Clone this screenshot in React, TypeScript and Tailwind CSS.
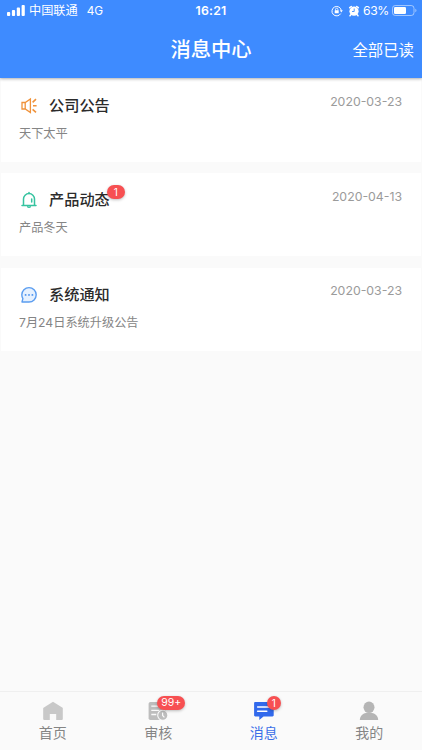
import type { ReactNode } from 'react';

interface Message {
  title: string;
  date: string;
  summary: string;
  icon: ReactNode;
  unread?: number;
}

function HornIcon() {
  return (
    <svg className="h-5 w-5" viewBox="0 0 20 20" fill="none" stroke="#f0923a" strokeWidth="1.3">
      <path d="M3 6.500h3.200L11.400 3v13.500L6.200 13H3z" />
      <path d="M6.200 6.500V13" />
      <path d="M13.600 6.300l3.400-3.100M14 9.800h3.600M13.600 13.300l3.400 3.100" strokeWidth="1.6" />
    </svg>
  );
}

function BellIcon() {
  return (
    <svg className="h-5 w-5" viewBox="0 0 20 20" fill="none" stroke="#36c3a0" strokeWidth="1.5" strokeLinecap="round">
      <path d="M4.500 15.200V9.100a5.500 5.500 0 0 1 11 0v6.100" />
      <path d="M3 15.400h14M10 2.400v1M12.700 9v2.900" />
      <path d="M8.700 16.800c.5.600 2.100.6 2.600 0" />
    </svg>
  );
}

function ChatIcon() {
  return (
    <svg className="h-5 w-5" viewBox="0 0 20 20">
      <path
        d="M2.800 9.800a7.200 7.200 0 1 1 7.200 7.200H3l.9-3.400A7.200 7.200 0 0 1 2.800 9.800z"
        fill="#e6f1ff"
        stroke="#5b9df0"
        strokeWidth="1.4"
        strokeLinejoin="round"
      />
      <circle cx="6.600" cy="9.900" r=".95" fill="#4a90ee" />
      <circle cx="10" cy="9.900" r=".95" fill="#4a90ee" />
      <circle cx="13.400" cy="9.900" r=".95" fill="#4a90ee" />
    </svg>
  );
}

const messages: Message[] = [
  { title: '公司公告', date: '2020-03-23', summary: '天下太平', icon: <HornIcon /> },
  { title: '产品动态', date: '2020-04-13', summary: '产品冬天', icon: <BellIcon />, unread: 1 },
  { title: '系统通知', date: '2020-03-23', summary: '7月24日系统升级公告', icon: <ChatIcon /> },
];

function StatusBar() {
  return (
    <div className="grid h-[22px] grid-cols-[1fr_auto_1fr] items-center pl-[7px] pr-[5px] text-[12px] leading-none">
      <div className="flex items-center">
        <svg className="h-[11px] w-[18px]" viewBox="0 0 18 11" fill="currentColor">
          <rect x="0" y="7" width="3.2" height="4" rx=".9" />
          <rect x="4.9" y="5" width="3.2" height="6" rx=".9" />
          <rect x="9.8" y="2.6" width="3.2" height="8.4" rx=".9" />
          <rect x="14.6" y="0" width="3.2" height="11" rx=".9" />
        </svg>
        <span className="ml-1 pt-px text-[12.2px]">中国联通</span>
        <span className="ml-[9px] pt-[2px] text-[11.8px]">4G</span>
      </div>
      <span className="pr-[2px] text-[12.3px] font-semibold tracking-[0.2px]">16:21</span>
      <div className="flex items-center justify-end">
        <svg className="h-3 w-3" viewBox="0 0 12 12" fill="none" stroke="currentColor">
          <path d="M9.700 8.600a4.700 4.700 0 1 1 .6-3.200" />
          <path d="M8.800 5.300h3l-1.500 2.100z" fill="currentColor" stroke="none" />
          <rect x="3.700" y="5.300" width="4" height="3" rx=".4" fill="currentColor" stroke="none" />
          <path d="M4.500 5.500V4.400a1.200 1.200 0 0 1 2.400 0v1.100" strokeWidth=".8" />
        </svg>
        <svg className="ml-[5px] h-3 w-3" viewBox="0 0 12 12" fill="none" stroke="currentColor">
          <circle cx="6" cy="6.200" r="4.600" fill="currentColor" stroke="none" />
          <path d="M1.700 2.700L3.300 1.500M8.700 1.500l1.600 1.200M2.800 9.800l-.8 1M9.200 9.800l.8 1" strokeWidth="1.500" strokeLinecap="round" />
          <path d="M6.200 3.500v3H4" stroke="#3e8bff" strokeWidth=".9" />
        </svg>
        <span className="ml-[3px] text-[12.2px] tracking-[-0.35px]">63%</span>
        <svg className="ml-[3px] h-[11px] w-[25px]" viewBox="0 0 25 11">
          <rect x=".5" y=".5" width="21.5" height="10" rx="2.8" fill="none" stroke="#fff" strokeOpacity=".5" />
          <rect x="2" y="2" width="12" height="7" rx="1.3" fill="#fff" />
          <path d="M23.3 3.7c1.6.6 1.6 3 0 3.6z" fill="#fff" fillOpacity=".5" />
        </svg>
      </div>
    </div>
  );
}

function Header() {
  return (
    <header className="z-10 h-[78px] shrink-0 bg-[#3e8bff] text-white shadow-[0_1px_3px_rgba(0,0,0,0.3)]">
      <StatusBar />
      <div className="grid h-[56px] grid-cols-[1fr_auto_1fr] items-center pr-2">
        <span />
        <h1 className="pl-2 text-[20.3px] font-medium leading-none">消息中心</h1>
        <button className="justify-self-end pt-px text-[15.4px] leading-none">全部已读</button>
      </div>
    </header>
  );
}

function MessageCard({ title, date, summary, icon, unread }: Message) {
  return (
    <section className="h-[83px] bg-white pl-[18px] pr-[19px] pt-[17px]">
      <div className="flex h-5 items-center">
        {icon}
        <h2 className="relative ml-[10px] text-[15.2px] font-medium leading-5 text-[#2b2b2b]">
          {title}
          {unread && (
            <span className="absolute -right-[15px] -top-[5px] flex h-[14px] w-[18px] items-center justify-center rounded-full bg-[#f75052] text-[10px] font-normal text-white shadow-[0_1px_3px_rgba(0,0,0,0.25)]">
              {unread}
            </span>
          )}
        </h2>
        <time className="-mt-[7px] ml-auto text-[12.3px] text-[#9b9b9b]">{date}</time>
      </div>
      <p className="mt-[8px] text-[12.2px] leading-5 text-[#858585]">{summary}</p>
    </section>
  );
}

function HomeIcon() {
  return (
    <svg className="h-5 w-5" viewBox="0 0 20 20" fill="#c8c8c8">
      <path d="M10 .8L19.6 6.8a.6.6 0 0 1 .2.5V18a1 1 0 0 1-1 1h-5.600v-6H6.800v6H1.200a1 1 0 0 1-1-1V7.3c0-.2.1-.4.3-.5z" />
    </svg>
  );
}

function AuditIcon() {
  return (
    <svg className="h-5 w-5" viewBox="0 0 20 20" fill="#bdbdbd">
      <rect x=".6" y="1" width="17" height="18" rx="1.8" />
      <path d="M3.3 5.2h8M3.3 9.3h8M3.3 13.5h5" stroke="#fafafa" strokeWidth="1.3" />
      <circle cx="14.8" cy="14.2" r="5.1" stroke="#fafafa" strokeWidth="1.1" />
      <path d="M14.6 11.4v3.1l1.8 1.9" fill="none" stroke="#fafafa" strokeWidth="1.2" />
    </svg>
  );
}

function NewsIcon() {
  return (
    <svg className="h-5 w-5" viewBox="0 0 20 20" fill="#3169ec">
      <path d="M1.3 1h17.2c.7 0 1.2.5 1.2 1.2v12c0 .7-.5 1.2-1.2 1.2h-9L5.3 19v-3.6h-4c-.7 0-1.2-.5-1.2-1.2v-12C.1 1.500.6 1 1.3 1z" />
      <path d="M3.6 6h12.2M3.6 10.300h9.200" stroke="#fff" strokeWidth="1.5" strokeLinecap="round" />
    </svg>
  );
}

function MineIcon() {
  return (
    <svg className="h-5 w-5" viewBox="0 0 20 20" fill="#b5b5b5">
      <ellipse cx="10" cy="6.300" rx="5.500" ry="5.800" />
      <path d="M.8 19c.2-4 2.700-6.300 6.200-7h6c3.500.7 6 3 6.200 7z" />
    </svg>
  );
}

const tabs = [
  { label: '首页', icon: <HomeIcon /> },
  { label: '审核', icon: <AuditIcon />, badge: '99+' },
  { label: '消息', icon: <NewsIcon />, badge: '1', active: true },
  { label: '我的', icon: <MineIcon /> },
];

function TabBar() {
  return (
    <nav className="grid h-[59px] shrink-0 grid-cols-4 border-t border-[#efefef] bg-[#fafafa]">
      {tabs.map((tab) => (
        <button key={tab.label} className="flex flex-col items-center pt-[9px]">
          <span className="relative">
            {tab.icon}
            {tab.badge && (
              <span
                className={
                  tab.badge.length > 1
                    ? 'absolute -top-[5px] left-[9px] flex h-[14px] w-[28px] items-center justify-center rounded-full bg-[#f75052] text-[10.5px] leading-none text-white shadow-[0_1px_3px_rgba(0,0,0,0.25)]'
                    : 'absolute -top-[5px] left-[13px] flex h-[14px] w-[14px] items-center justify-center rounded-full bg-[#f75052] text-[10px] leading-none text-white shadow-[0_1px_3px_rgba(0,0,0,0.25)]'
                }
              >
                {tab.badge}
              </span>
            )}
          </span>
          <span className={tab.active ? 'mt-[2px] text-[14px] leading-5 text-[#3b6fe8]' : 'mt-[2px] text-[14px] leading-5 text-[#858585]'}>
            {tab.label}
          </span>
        </button>
      ))}
    </nav>
  );
}

export default function App() {
  return (
    <div className="flex h-[750px] w-[422px] flex-col overflow-hidden bg-[#fafafa] font-['Inter','Noto_Sans_CJK_SC',sans-serif]">
      <Header />
      <main className="flex flex-1 flex-col gap-[11.8px] px-px pt-[0.5px]">
        {messages.map((message) => (
          <MessageCard key={message.title} {...message} />
        ))}
      </main>
      <TabBar />
    </div>
  );
}
